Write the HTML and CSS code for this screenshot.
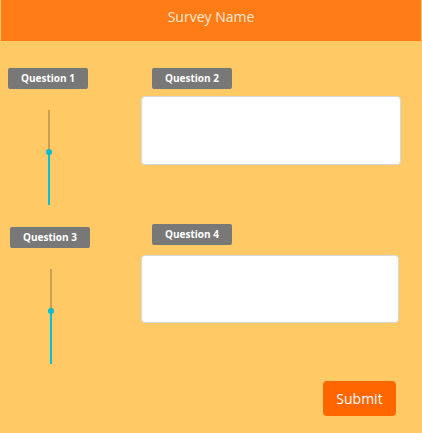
FILE: index.html
```html
<!DOCTYPE html>
<html>
<head>
<meta charset="utf-8">
<link rel="stylesheet" href="styles.css">
</head>
<body>
<header class="header">Survey Name</header>
<main class="form">
  <div class="row">
    <div class="col-left">
      <div class="label">Question 1</div>
      <div class="slider">
        <div class="track-top"></div>
        <div class="thumb"></div>
        <div class="track-bottom"></div>
      </div>
    </div>
    <div class="col-right">
      <div class="label">Question 2</div>
      <textarea class="answer"></textarea>
    </div>
  </div>
  <div class="row row-second">
    <div class="col-left col-shift">
      <div class="label">Question 3</div>
      <div class="slider">
        <div class="track-top"></div>
        <div class="thumb"></div>
        <div class="track-bottom"></div>
      </div>
    </div>
    <div class="col-right">
      <div class="label">Question 4</div>
      <textarea class="answer answer-narrow"></textarea>
    </div>
  </div>
  <div class="actions">
    <button class="submit">Submit</button>
  </div>
</main>
</body>
</html>
```
FILE: styles.css
```css
html, body {
  margin: 0;
  padding: 0;
  background: #ffc966;
  font-family: "Open Sans", "Liberation Sans", sans-serif;
}
.header {
  margin: 0 1px;
  height: 41px;
  box-sizing: border-box;
  padding-top: 7px;
  line-height: 20px;
  font-size: 14px;
  text-align: center;
  color: #fde9d4;
  background: #ff7c17;
}
.form {
  padding-top: 27px;
}
.row {
  display: flex;
  align-items: flex-start;
}
.row-second {
  margin-top: 19px;
}
.col-left {
  width: 141px;
  padding-left: 8px;
  box-sizing: border-box;
  display: flex;
  flex-direction: column;
}
.col-shift {
  padding-left: 10px;
  padding-top: 3px;
}
.col-right {
  display: flex;
  flex-direction: column;
}
.label {
  width: 80px;
  height: 21px;
  line-height: 21px;
  background: #787878;
  color: #fff;
  font-size: 10px;
  font-weight: 700;
  text-align: center;
  border-radius: 2px;
}
.col-right .label {
  margin-left: 11px;
}
.slider {
  margin-top: 21px;
  margin-left: 39px;
  width: 3px;
  height: 95px;
  display: flex;
  flex-direction: column;
  align-items: center;
  position: relative;
}
.track-top {
  width: 2px;
  height: 42px;
  background: #d09e52;
}
.track-bottom {
  width: 2px;
  flex: 1;
  background: #00c2d9;
}
.thumb {
  position: absolute;
  top: 39px;
  left: -1.5px;
  width: 6px;
  height: 6px;
  border-radius: 50%;
  background: #00bcd4;
}
.answer {
  margin: 7px 0 0 0;
  width: 260px;
  height: 69px;
  box-sizing: border-box;
  border: 1px solid #d8d8d8;
  border-radius: 4px;
  background: #fff;
  resize: none;
  padding: 4px;
}
.answer-narrow {
  margin-top: 10px;
  width: 258px;
  height: 68px;
}
.actions {
  display: flex;
  justify-content: flex-end;
  padding-right: 26px;
  margin-top: 17px;
}
.submit {
  width: 73px;
  height: 35px;
  border: none;
  border-radius: 4px;
  background: #ff6600;
  color: #fff;
  font-family: "Open Sans", "Liberation Sans", sans-serif;
  font-size: 14px;
  padding: 0;
}
```
